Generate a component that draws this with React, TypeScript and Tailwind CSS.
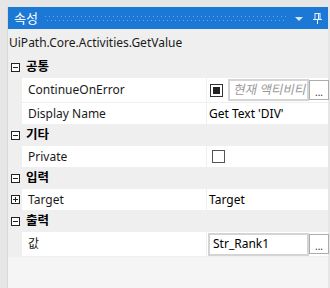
import React from "react";

const font = { fontFamily: '"Segoe UI", "Noto Sans", "Noto Sans CJK KR", sans-serif' };

function Box({ open }: { open: boolean }) {
  return (
    <div className="w-[9px] h-[9px] border border-[#222] bg-white relative shrink-0">
      <div className="absolute left-[1px] top-[3px] w-[5px] h-[1px] bg-[#222]" />
      {!open && <div className="absolute left-[3px] top-[1px] w-[1px] h-[5px] bg-[#222]" />}
    </div>
  );
}

function Category({ label }: { label: string }) {
  return (
    <div className="h-[21px] flex items-center bg-[#efefef]">
      <div className="w-[14px] flex justify-center pl-[1px]">
        <Box open />
      </div>
      <span className="ml-[4px] text-[12.5px] font-bold text-black">{label}</span>
    </div>
  );
}

function Row({ name, children, tall, expand }: { name: string; children?: React.ReactNode; tall?: boolean; expand?: boolean }) {
  return (
    <div className={`flex border-b border-[#efefef] ${tall ? "h-[25px]" : "h-[22px]"}`}>
      <div className="w-[14px] bg-[#efefef] flex items-center justify-center pl-[1px]">
        {expand && <Box open={false} />}
      </div>
      <div className="w-[184px] bg-white flex items-center pl-[6px] text-[12px] text-[#1a1a1a]">{name}</div>
      <div className="w-[1px] bg-[#efefef]" />
      <div className="flex-1 min-w-0 bg-white flex items-center text-[12px] text-black">{children}</div>
    </div>
  );
}

function Dots() {
  return (
    <svg className="flex-1 min-w-0 w-[10px] h-[7px] ml-[7px] mr-[8px]">
      <defs>
        <pattern id="d" width="4" height="7" patternUnits="userSpaceOnUse">
          <rect x="0" y="1" width="1" height="1" fill="#6aa6e6" />
          <rect x="2" y="5" width="1" height="1" fill="#6aa6e6" />
        </pattern>
      </defs>
      <rect width="100%" height="100%" fill="url(#d)" />
    </svg>
  );
}

export default function App() {
  return (
    <div className="w-[330px] h-[288px] bg-[#e6e6e6] pt-[7px] pl-[7px] pr-[2px] flex overflow-hidden" style={font}>
      <div className="flex-1 min-w-0 flex flex-col bg-[#f5f5f5] border-l border-[#d9d9d9]">
        <div className="h-[22px] bg-[#1b79d5] flex items-center pl-[6px] pr-[5px]">
          <span className="text-white text-[13px] leading-none">속성</span>
          <Dots />
          <svg width="9" height="5" viewBox="0 0 9 5" className="mr-[9px] mt-[2px] shrink-0">
            <polygon points="0,0 8,0 4,4" fill="#d8e8f8" />
          </svg>
          <svg width="9" height="11" viewBox="0 0 9 11" className="mr-[1px] shrink-0">
            <rect x="2" y="0.5" width="5" height="6" fill="none" stroke="#e8f2fc" />
            <rect x="5" y="1" width="1" height="5" fill="#e8f2fc" />
            <rect x="0" y="6" width="9" height="1" fill="#e8f2fc" />
            <rect x="4" y="7" width="1" height="4" fill="#e8f2fc" />
          </svg>
        </div>
        <div className="h-[28px] flex items-center pl-[1px] text-[12px] text-[#1a1a1a] bg-[#efefef]">
          UiPath.Core.Activities.GetValue
        </div>
        <div className="flex flex-col">
          <Category label="공통" />
          <Row name="ContinueOnError" tall>
            <div className="ml-[3px] w-[13px] h-[13px] shrink-0 border border-[#333] bg-white flex items-center justify-center">
              <div className="w-[7px] h-[7px] bg-[#222]" />
            </div>
            <div className="ml-[5px] w-[81px] h-[22px] shrink-0 border-2 border-[#d4d4d4] bg-white flex items-center pl-[4px] overflow-hidden whitespace-nowrap">
              <span className="text-[#9a9a9a] text-[12.5px] -skew-x-12 inline-block">현재 액티비티</span>
            </div>
            <div className="w-[20px] h-[20px] shrink-0 border border-[#adadad] bg-white flex items-end justify-center text-[10px] leading-[14px] text-[#333]">...</div>
          </Row>
          <Row name="Display Name">
            <span className="ml-[2px]">Get Text 'DIV'</span>
          </Row>
          <Category label="기타" />
          <Row name="Private">
            <div className="ml-[5px] w-[13px] h-[13px] border border-[#555] bg-white" />
          </Row>
          <Category label="입력" />
          <Row name="Target" expand>
            <span className="ml-[2px]">Target</span>
          </Row>
          <Category label="출력" />
          <Row name="값" tall>
            <div className="ml-[1px] w-[101px] h-[23px] shrink-0 border-2 border-[#d4d4d4] bg-white flex items-center pl-[3px]">
              <span>Str_Rank1</span>
            </div>
            <div className="w-[20px] h-[20px] shrink-0 border border-[#adadad] bg-white flex items-end justify-center text-[10px] leading-[14px] text-[#333]">...</div>
          </Row>
        </div>
      </div>
    </div>
  );
}
